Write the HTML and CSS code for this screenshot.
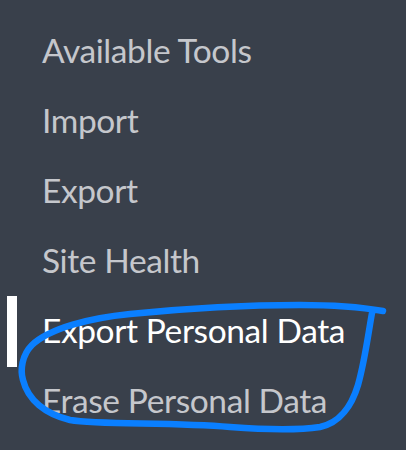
FILE: index.html
```html
<!DOCTYPE html>
<html lang="en">
<head>
  <meta charset="UTF-8">
  <meta name="viewport" content="width=device-width, initial-scale=1.0">
  <title>Tools</title>
  <link rel="stylesheet" href="styles.css">
</head>
<body>
  <ul class="submenu">
    <li>Available Tools</li>
    <li>Import</li>
    <li>Export</li>
    <li>Site Health</li>
    <li class="current">Export Personal Data</li>
    <li>Erase Personal Data</li>
  </ul>

  <!-- hand-drawn marker round the two privacy items -->
  <svg class="scribble" viewBox="0 0 406 450" width="406" height="450">
    <path d="M383 311 C 360 307, 330 305, 300 305 C 240 305, 170 310, 130 314 C 90 318, 50 328, 32 345 C 22 355, 20 370, 23 380 C 28 400, 45 414, 70 420 C 100 425, 170 422, 230 427 C 270 430, 300 430, 320 427 C 340 423, 352 405, 358 385 C 365 360, 368 335, 372 313"/>
  </svg>
</body>
</html>
```

FILE: styles.css
```css
html, body {
  margin: 0;
  height: 100%;
}
body {
  background-color: #39404b;
  font-family: 'Lato', 'Open Sans', sans-serif;
  position: relative;
  overflow: hidden;
}
.submenu {
  list-style-type: none;
  margin: 0;
  padding: 15px 0 0 42px;
}
.submenu li {
  position: relative;
  height: 70px;
  line-height: 70px;
  font-size: 33.5px;
  letter-spacing: -0.4px;
  color: #c5c7cc;
  white-space: nowrap;
}
.submenu li.current {
  color: #fff;
}
.submenu li.current::before {
  content: '';
  position: absolute;
  left: -35px;
  top: 1px;
  width: 10px;
  height: 71px;
  background-color: #fff;
}
.scribble {
  position: absolute;
  left: 0;
  top: 0;
}
.scribble path {
  fill: none;
  stroke: #0a7fff;
  stroke-width: 6.5;
  stroke-linecap: round;
  stroke-linejoin: round;
}
```
